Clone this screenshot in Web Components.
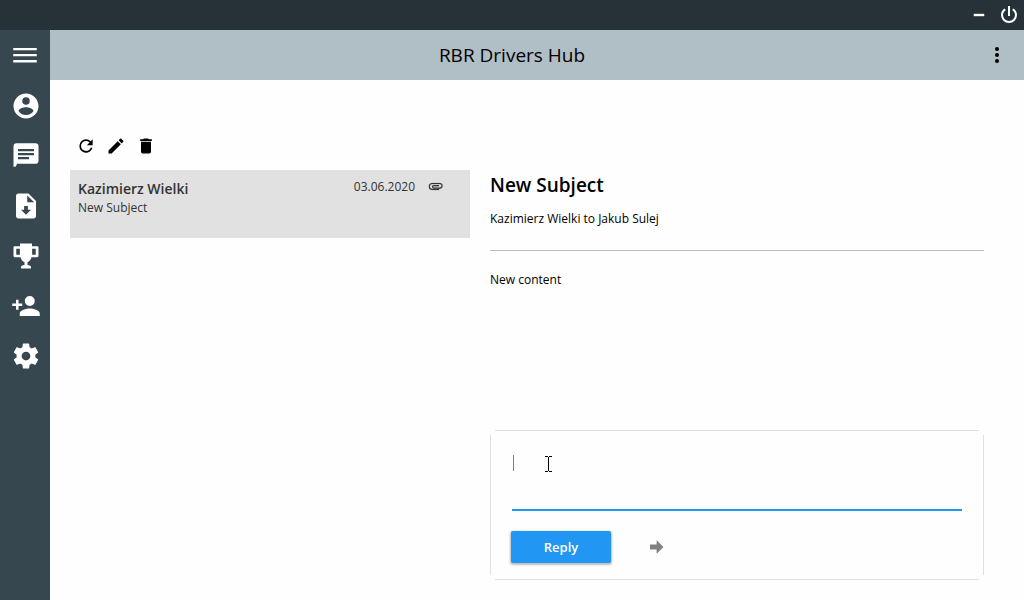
<!DOCTYPE html>
<html lang="en">
<head>
<meta charset="utf-8">
<title>RBR Drivers Hub</title>
<style>
  html, body { height: 100%; margin: 0; }
  body { font-family: "Open Sans", "Noto Sans", sans-serif; color: #000; background: #fefefe; }
</style>
</head>
<body>
<hub-app></hub-app>

<script>
const ICONS = {
  menu: '<path d="M2.6,6.4H21.4V8.2H2.6V6.4M2.6,11.2H21.4V12.9H2.6V11.2M2.6,16H21.4V17.9H2.6V16Z"/>',
  account: '<path d="M12,19.2C9.5,19.2 7.29,17.92 6,16C6.03,14 10,12.9 12,12.9C14,12.9 17.97,14 18,16C16.71,17.92 14.5,19.2 12,19.2M12,5A3,3 0 0,1 15,8A3,3 0 0,1 12,11A3,3 0 0,1 9,8A3,3 0 0,1 12,5M12,2A10,10 0 0,0 2,12A10,10 0 0,0 12,22A10,10 0 0,0 22,12C22,6.47 17.5,2 12,2Z"/>',
  message: '<path fill-rule="evenodd" d="M4.5,1.8H19.5A2.5,2.5 0 0 1 22,4.3V15.7A2.5,2.5 0 0 1 19.5,18.2H5L3.6,20.6H2V4.3A2.5,2.5 0 0 1 4.5,1.8M5.6,6.4V8.2H18.4V6.4H5.6M5.6,9.6V11.4H18.4V9.6H5.6M5.6,12.8V14.6H14.4V12.8H5.6Z"/>',
  file: '<path d="M14,2H6C4.89,2 4,2.89 4,4V20C4,21.11 4.89,22 6,22H18C19.11,22 20,21.11 20,20V8L14,2M12,19L8,15H10.5V12H13.5V15H16L12,19M13,9V3.5L18.5,9H13Z"/>',
  trophy: '<path fill-rule="evenodd" d="M7.2,2H16.8V4.2H21A1,1 0 0 1 22,5.2V11.8A1.2,1.2 0 0 1 20.8,13H16.4C15.9,15 14.6,16.4 13.2,17V19.2C15,19.5 16,20 16,20.8V22H8V20.8C8,20 9,19.5 10.8,19.2V17C9.4,16.4 8.1,15 7.6,13H3.2A1.2,1.2 0 0 1 2,11.8V5.2A1,1 0 0 1 3,4.2H7.2V2M4.2,6.2V11H7.1V6.2H4.2M16.9,6.2V11H19.8V6.2H16.9Z"/>',
  personadd: '<path d="M15,14C12.33,14 7,15.33 7,18V20H23V18C23,15.33 17.67,14 15,14M6,10V7H4V10H1V12H4V15H6V12H9V10M15,12A4,4 0 0,0 19,8A4,4 0 0,0 15,4A4,4 0 0,0 11,8A4,4 0 0,0 15,12Z"/>',
  gear: '<path d="M12,15.5A3.5,3.5 0 0,1 8.5,12A3.5,3.5 0 0,1 12,8.5A3.5,3.5 0 0,1 15.5,12A3.5,3.5 0 0,1 12,15.5M19.43,12.97C19.47,12.65 19.5,12.33 19.5,12C19.5,11.67 19.47,11.34 19.43,11L21.54,9.37C21.73,9.22 21.78,8.95 21.66,8.73L19.66,5.27C19.54,5.05 19.27,4.96 19.05,5.05L16.56,6.05C16.04,5.66 15.5,5.32 14.87,5.07L14.5,2.42C14.46,2.18 14.25,2 14,2H10C9.75,2 9.54,2.18 9.5,2.42L9.13,5.07C8.5,5.32 7.96,5.66 7.44,6.05L4.95,5.05C4.73,4.96 4.46,5.05 4.34,5.27L2.34,8.73C2.21,8.95 2.27,9.22 2.46,9.37L4.57,11C4.53,11.34 4.5,11.67 4.5,12C4.5,12.33 4.53,12.65 4.57,12.97L2.46,14.63C2.27,14.78 2.21,15.05 2.34,15.27L4.34,18.73C4.46,18.95 4.73,19.03 4.95,18.95L7.44,17.94C7.96,18.34 8.5,18.68 9.13,18.93L9.5,21.58C9.54,21.82 9.75,22 10,22H14C14.25,22 14.46,21.82 14.5,21.58L14.87,18.93C15.5,18.67 16.04,18.34 16.56,17.94L19.05,18.95C19.27,19.03 19.54,18.95 19.66,18.73L21.66,15.27C21.78,15.05 21.73,14.78 21.54,14.63L19.43,12.97Z"/>',
  minimize: '<path d="M5,10.4H19V13.6H5Z"/>',
  power: '<path d="M16.56,5.44L15.11,6.89C16.84,7.94 18,9.83 18,12A6,6 0 0,1 12,18A6,6 0 0,1 6,12C6,9.83 7.16,7.94 8.88,6.88L7.44,5.44C5.36,6.88 4,9.28 4,12A8,8 0 0,0 12,20A8,8 0 0,0 20,12C20,9.28 18.64,6.88 16.56,5.44M13,3H11V13H13"/>',
  dots: '<path d="M12,16A2,2 0 0,1 14,18A2,2 0 0,1 12,20A2,2 0 0,1 10,18A2,2 0 0,1 12,16M12,10A2,2 0 0,1 14,12A2,2 0 0,1 12,14A2,2 0 0,1 10,12A2,2 0 0,1 12,10M12,4A2,2 0 0,1 14,6A2,2 0 0,1 12,8A2,2 0 0,1 10,6A2,2 0 0,1 12,4Z"/>',
  refresh: '<path d="M17.65,6.35C16.2,4.9 14.21,4 12,4A8,8 0 0,0 4,12A8,8 0 0,0 12,20C15.73,20 18.84,17.45 19.73,14H17.65C16.83,16.33 14.61,18 12,18A6,6 0 0,1 6,12A6,6 0 0,1 12,6C13.66,6 15.14,6.69 16.22,7.78L13,11H20V4L17.65,6.35Z"/>',
  pencil: '<path d="M20.71,7.04C21.1,6.65 21.1,6 20.71,5.63L18.37,3.29C18,2.9 17.35,2.9 16.96,3.29L15.12,5.12L18.87,8.87M3,17.25V21H6.75L17.81,9.93L14.06,6.18L3,17.25Z"/>',
  trash: '<path d="M19,4H15.5L14.5,3H9.5L8.5,4H5V6H19M6,19A2,2 0 0,0 8,21H16A2,2 0 0,0 18,19V7H6V19Z"/>',
  clip: '<path stroke="currentColor" stroke-width=".2" d="M7.5,17A5,5 0 0,1 2.5,12A5,5 0 0,1 7.5,7H18A4,4 0 0,1 22,11A4,4 0 0,1 18,15H9.5A2.5,2.5 0 0,1 7,12.5A2.5,2.5 0 0,1 9.5,10H17V11.5H9.5A1,1 0 0,0 8.5,12.5A1,1 0 0,0 9.5,13.5H18A2.5,2.5 0 0,0 20.5,11A2.5,2.5 0 0,0 18,8.5H7.5A3.5,3.5 0 0,0 4,12A3.5,3.5 0 0,0 7.5,15.5H17V17H7.5Z"/>',
  arrow: '<path d="M2.6,8.7H11.5V3L20.6,12L11.5,21V15.3H2.6Z"/>'
};

class HubIcon extends HTMLElement {
  connectedCallback() {
    this.attachShadow({ mode: "open" }).innerHTML = `
      <style>
        :host { display: block; flex: none; width: var(--icon-size, 20px); height: var(--icon-size, 20px); }
        svg { display: block; width: 100%; height: 100%; fill: currentColor; }
      </style>
      <svg viewBox="0 0 24 24" aria-hidden="true">${ICONS[this.getAttribute("name")]}</svg>`;
  }
}
customElements.define("hub-icon", HubIcon);

class IconButton extends HTMLElement {
  connectedCallback() {
    this.attachShadow({ mode: "open" }).innerHTML = `
      <style>
        :host { display: block; box-sizing: border-box; }
        button { display: flex; align-items: center; justify-content: center; width: 100%; height: 100%;
          margin: 0; padding: 0; border: 0; background: none; color: inherit; cursor: pointer; }
      </style>
      <button type="button" aria-label="${this.getAttribute("label")}"><hub-icon name="${this.getAttribute("icon")}"></hub-icon></button>`;
  }
}
customElements.define("icon-button", IconButton);

class WindowBar extends HTMLElement {
  connectedCallback() {
    this.attachShadow({ mode: "open" }).innerHTML = `
      <style>
        :host { display: flex; justify-content: flex-end; height: 30px; background: #263238; color: #fff; }
        icon-button { width: 30px; --icon-size: 24px; }
        .min { --icon-size: 18px; }
      </style>
      <icon-button class="min" icon="minimize" label="Minimize"></icon-button>
      <icon-button icon="power" label="Close"></icon-button>`;
  }
}
customElements.define("window-bar", WindowBar);

class SideNav extends HTMLElement {
  connectedCallback() {
    this.attachShadow({ mode: "open" }).innerHTML = `
      <style>
        :host { display: block; width: 50px; background: #37474f; color: #fff; }
        nav { display: flex; flex-direction: column; }
        icon-button { height: 50px; padding: 2px 0 0 2px; --icon-size: 30px; }
        .toggle { padding: 0; }
      </style>
      <nav aria-label="Main">
        <icon-button class="toggle" icon="menu" label="Menu"></icon-button>
        <icon-button icon="account" label="Account"></icon-button>
        <icon-button icon="message" label="Messages"></icon-button>
        <icon-button icon="file" label="Downloads"></icon-button>
        <icon-button icon="trophy" label="Results"></icon-button>
        <icon-button icon="personadd" label="Add friend"></icon-button>
        <icon-button icon="gear" label="Settings"></icon-button>
      </nav>`;
  }
}
customElements.define("side-nav", SideNav);

class HubHeader extends HTMLElement {
  connectedCallback() {
    this.attachShadow({ mode: "open" }).innerHTML = `
      <style>
        :host { display: grid; grid-template-columns: 54px 1fr 54px; align-items: center; height: 50px; background: #b0bec5; }
        h1 { grid-column: 2; margin: 0; padding-right: 50px; text-align: center; font-size: 19px; line-height: 28px; font-weight: 400; }
        icon-button { height: 50px; --icon-size: 24px; }
      </style>
      <h1><slot></slot></h1>
      <icon-button icon="dots" label="More"></icon-button>`;
  }
}
customElements.define("hub-header", HubHeader);

class MailToolbar extends HTMLElement {
  connectedCallback() {
    this.attachShadow({ mode: "open" }).innerHTML = `
      <style>
        :host { display: flex; padding-left: 1px; }
        icon-button { width: 30px; height: 30px; --icon-size: 20px; }
      </style>
      <icon-button icon="refresh" label="Refresh"></icon-button>
      <icon-button icon="pencil" label="Compose"></icon-button>
      <icon-button icon="trash" label="Delete"></icon-button>`;
  }
}
customElements.define("mail-toolbar", MailToolbar);

class MailItem extends HTMLElement {
  connectedCallback() {
    this.attachShadow({ mode: "open" }).innerHTML = `
      <style>
        :host { display: grid; grid-template-columns: 1fr auto auto; column-gap: 12px; align-content: start;
          box-sizing: border-box; min-height: 68px; padding: 8px 26px 8px 8px; background: #e1e1e1; color: #333; }
        .from { font-size: 14px; line-height: 22px; font-weight: 600; }
        .date { font-size: 12px; line-height: 18px; }
        hub-icon { --icon-size: 17px; }
        .subject { grid-column: 1 / -1; font-size: 12px; line-height: 16px; }
      </style>
      <div class="from"><slot name="from"></slot></div>
      <div class="date"><slot name="date"></slot></div>
      <hub-icon name="clip"></hub-icon>
      <div class="subject"><slot name="subject"></slot></div>`;
  }
}
customElements.define("mail-item", MailItem);

class MailView extends HTMLElement {
  connectedCallback() {
    this.attachShadow({ mode: "open" }).innerHTML = `
      <style>
        :host { display: block; }
        h2 { margin: 0; font-size: 19px; line-height: 30px; font-weight: 600; }
        .route, .body { font-size: 12px; line-height: 18px; }
        .route { padding: 10px 0 22px; border-bottom: 1px solid #bdbdbd; }
        .body { padding-top: 20px; }
      </style>
      <h2><slot name="subject"></slot></h2>
      <div class="route"><slot name="route"></slot></div>
      <div class="body"><slot></slot></div>`;
  }
}
customElements.define("mail-view", MailView);

class ReplyBox extends HTMLElement {
  connectedCallback() {
    this.attachShadow({ mode: "open" }).innerHTML = `
      <style>
        :host { display: block; position: relative; box-sizing: border-box; min-height: 150px; padding: 21px 22px 16px;
          background:
            linear-gradient(#e0e0e0, #e0e0e0) center top / calc(100% - 10px) 1px no-repeat,
            linear-gradient(#e0e0e0, #e0e0e0) center bottom / calc(100% - 10px) 1px no-repeat,
            linear-gradient(#e0e0e0, #e0e0e0) left center / 1px calc(100% - 10px) no-repeat,
            linear-gradient(#e0e0e0, #e0e0e0) right center / 1px calc(100% - 10px) no-repeat; }
        textarea { display: block; box-sizing: border-box; width: 100%; height: 60px; margin: 0; padding: 2px; border: 0;
          border-bottom: 2px solid #2196f3; background: none; resize: none; outline: none; font: inherit; font-size: 12px; }
        .caret { position: absolute; left: 23px; top: 25px; width: 1px; height: 16px; background: #2196f3; }
        .pointer { position: absolute; left: 55px; top: 26px; width: 7px; height: 16px; }
        .actions { display: flex; align-items: center; gap: 36px; padding-top: 20px; margin-left: -1px; }
        .reply { width: 100px; height: 32px; padding: 0; border: 0; border-radius: 2px; background: #2196f3; color: #fff;
          font: inherit; font-size: 13px; line-height: 18px; font-weight: 600; box-shadow: 0 1px 2px 1px rgba(0,0,0,.25); }
        icon-button { width: 20px; height: 20px; color: #808080; --icon-size: 18px; }
      </style>
      <textarea aria-label="Reply text"></textarea>
      <div class="caret"></div>
      <svg class="pointer" viewBox="0 0 7 16" shape-rendering="crispEdges" aria-hidden="true"><path d="M0 0H3V1H4V0H7V1H4V15H7V16H4V15H3V16H0V15H3V1H0Z"/></svg>
      <div class="actions">
        <button class="reply" type="button"><slot></slot></button>
        <icon-button icon="arrow" label="Forward"></icon-button>
      </div>`;
  }
}
customElements.define("reply-box", ReplyBox);

class HubApp extends HTMLElement {
  connectedCallback() {
    this.attachShadow({ mode: "open" }).innerHTML = `
      <style>
        :host { display: grid; grid-template: auto auto 1fr / auto 1fr; min-height: 100%; }
        window-bar { grid-column: 1 / -1; }
        side-nav { grid-row: 2 / 4; }
        main { display: grid; grid-template-columns: minmax(0, 400px) minmax(0, 1fr); gap: 20px; padding: 50px 40px 20px 20px; }
        section { display: flex; flex-direction: column; }
        mail-toolbar { padding-top: 1px; padding-bottom: 9px; }
        .read { padding-top: 40px; }
        mail-view { flex: 1; }
      </style>
      <window-bar></window-bar>
      <side-nav></side-nav>
      <hub-header>RBR Drivers Hub</hub-header>
      <main>
        <section>
          <mail-toolbar></mail-toolbar>
          <mail-item>
            <span slot="from">Kazimierz Wielki</span>
            <span slot="date">03.06.2020</span>
            <span slot="subject">New Subject</span>
          </mail-item>
        </section>
        <section class="read">
          <mail-view>
            <span slot="subject">New Subject</span>
            <span slot="route">Kazimierz Wielki to Jakub Sulej</span>
            New content
          </mail-view>
          <reply-box>Reply</reply-box>
        </section>
      </main>`;
  }
}
customElements.define("hub-app", HubApp);
</script>
</body>
</html>
